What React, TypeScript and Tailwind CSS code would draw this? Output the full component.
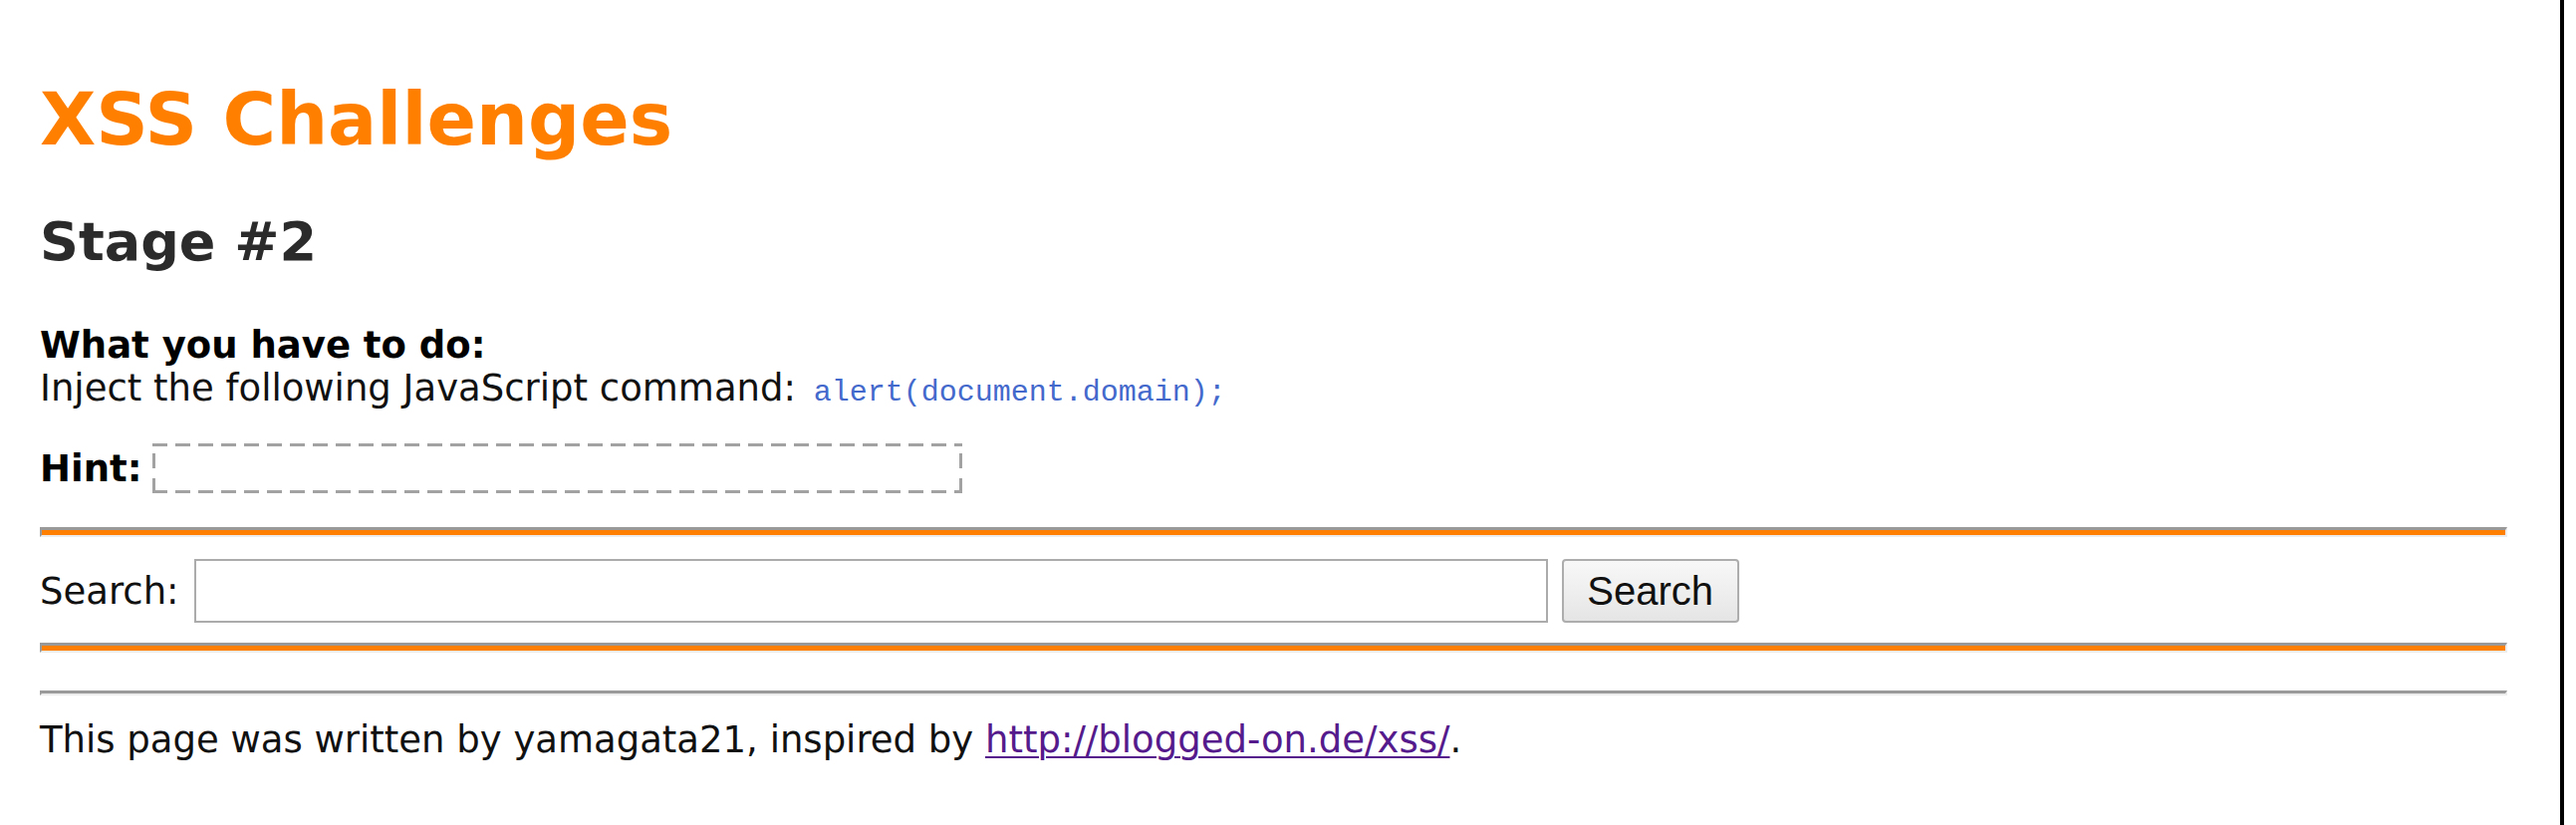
import React from "react";

// XSS Challenges – stage #2 page
function RedRule({ className = "" }: { className?: string }) {
  return (
    <div
      className={`h-[10px] w-[2477px] border-t-[3px] border-l-2 border-b-2 border-r-2 border-t-[#999999] border-l-[#999999] border-b-[#ececec] border-r-[#ececec] bg-[#ff8000] ${className}`}
    />
  );
}

export default function App() {
  return (
    <div className="flex min-h-[828px] w-[2586px] bg-white">
      <div className="w-[2574px] border-r-4 border-black pl-[40px] pt-[83px] font-['DejaVu_Sans',Verdana,sans-serif] text-[#111111]">
        <h1 className="text-[73px] font-bold leading-[73px] text-[#ff8000]">XSS Challenges</h1>
        <h2 className="mt-[60px] text-[54px] font-bold leading-[54px] text-[#2b2b2b]">Stage #2</h2>

        <div className="mt-[55px] text-[37px] leading-[43px]">
          <b className="text-black">What you have to do:</b>
          <br />
          Inject the following JavaScript command:{" "}
          <code className="ml-[6px] font-['Liberation_Mono',monospace] text-[30px] leading-none text-[#4469cc]">
            alert(document.domain);
          </code>
        </div>

        <div className="mt-[34px] flex h-[50px] items-center text-[37px] leading-[43px]">
          <b className="text-black">Hint:</b>
          {/* dashed box, long dashes like the original renderer */}
          <span className="ml-[11px] h-[50px] w-[813px] [background-image:linear-gradient(90deg,#a2a2a2_65%,transparent_65%),linear-gradient(90deg,#a2a2a2_65%,transparent_65%),linear-gradient(0deg,#a2a2a2_60%,transparent_60%),linear-gradient(0deg,#a2a2a2_60%,transparent_60%)] [background-position:0_0,0_100%,0_0,100%_0] [background-repeat:repeat-x,repeat-x,repeat-y,repeat-y] [background-size:23px_3px,23px_3px,3px_25px,3px_25px]" />
        </div>

        <RedRule className="mt-[34px]" />

        <form className="mt-[22px] flex h-[64px] items-center text-[37px] leading-[43px]">
          <span>Search:</span>
          <input
            type="text"
            className="ml-[15px] h-[64px] w-[1359px] border-2 border-[#ababab] bg-white outline-none"
          />
          <button
            type="button"
            className="ml-[14px] h-[64px] w-[178px] rounded-[4px] border-2 border-[#adadad] bg-gradient-to-b from-[#f8f8f8] to-[#e5e5e5] font-['Liberation_Sans',Arial,sans-serif] text-[40px] leading-none text-[#111111]"
          >
            Search
          </button>
        </form>

        <RedRule className="mt-[20px]" />

        <div className="mt-[38px] h-[5px] w-[2477px] border-t-[3px] border-l-2 border-b-2 border-r-2 border-t-[#9a9a9a] border-l-[#9a9a9a] border-b-[#ececec] border-r-[#ececec]" />

        <div className="mt-[23px] text-[37px] leading-[43px]">
          This page was written by yamagata21, inspired by{" "}
          <a
            href="#"
            className="text-[#551a8b] underline decoration-2 underline-offset-[4px]"
          >
            http://blogged-on.de/xss/
          </a>
          .
        </div>
      </div>
    </div>
  );
}
